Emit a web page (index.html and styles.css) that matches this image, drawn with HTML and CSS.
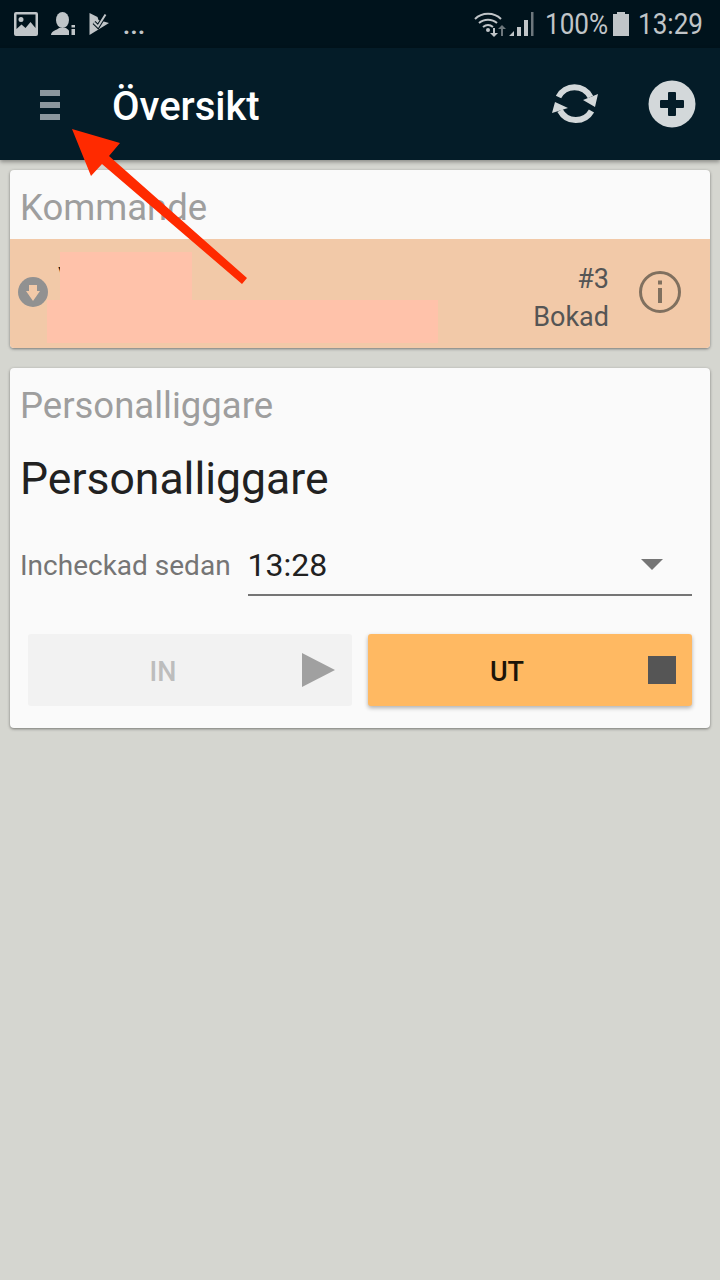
FILE: index.html
```html
<!DOCTYPE html>
<html lang="sv">
<head>
    <meta charset="UTF-8">
    <meta name="viewport" content="width=device-width, initial-scale=1.0">
    <title>Översikt</title>
    <link rel="stylesheet" href="styles.css">
</head>
<body>
    <div class="status-bar">
        <div class="status-left">
            <svg class="st-icon" width="24" height="24" viewBox="0 0 24 24"><path fill="#c0c5c8" fill-rule="evenodd" d="M2 0h20a2 2 0 0 1 2 2v20a2 2 0 0 1-2 2H2a2 2 0 0 1-2-2V2a2 2 0 0 1 2-2zM2.500 2.500V17l5-4.500 4 3.500 5-6 5 6V2.500zM7 5a2.500 2.500 0 1 1 0 5 2.500 2.500 0 0 1 0-5z"/></svg>
            <svg class="st-icon" width="24" height="24" viewBox="0 0 24 24"><ellipse cx="11.500" cy="8" rx="6.500" ry="8" fill="#c0c5c8"/><path fill="#c0c5c8" d="M0 23c0-4 6-5 8-7h7c1 1 3 2 3 3v4z"/><path fill="#c0c5c8" d="M20.500 13H24v2.500h-3.500zM20.500 17H24v6h-3.500z"/></svg>
            <svg class="st-icon" width="22" height="24" viewBox="0 0 22 24"><path fill="#c0c5c8" d="M1.500 1l8 4 1 3L21 11 1.500 23z"/><path fill="none" stroke="#00131c" stroke-width="4" d="M6 10.500l4 4L17.500 2.500"/><path fill="none" stroke="#c0c5c8" stroke-width="2" d="M6 10.500l4 4L17.500 2.500"/></svg>
            <span class="st-dots">...</span>
        </div>
        <div class="status-right">
            <svg class="st-wifi" width="34" height="26" viewBox="0 0 34 26"><path fill="none" stroke="#c0c5c8" stroke-width="2" d="M1 8c7-7 19-7 26 0M5 12c5-4.500 13-4.500 18 0M9 16c3-2.500 7-2.500 10 0"/><circle cx="14" cy="19" r="2" fill="#c0c5c8"/><path fill="#c0c5c8" d="M19 17h2v5h3l-4 4-4-4h3z"/><path fill="#6d777c" d="M28 14l4 4h-3v7h-2v-7h-3z"/></svg>
            <svg class="st-signal" width="25" height="24" viewBox="0 0 25 24"><path fill="#c0c5c8" d="M0 24l5-5v5zM8 15h4v9H8zM15 8h4v16h-4z"/><path fill="#6d777c" d="M22 0h2.500v24H22z"/></svg>
            <span class="st-text st-pct">100%</span>
            <svg class="st-battery" width="16" height="24" viewBox="0 0 16 24"><path fill="#c0c5c8" d="M4 0h8v2h4v22H0V2h4z"/></svg>
            <span class="st-text st-time">13:29</span>
        </div>
    </div>

    <div class="toolbar">
        <div class="menu-btn"><span></span><span></span><span></span></div>
        <div class="toolbar-title">Översikt</div>
        <svg class="refresh" width="46" height="42" viewBox="0 0 46 42"><path fill="none" stroke="#d3d8da" stroke-width="6" d="M6.500 14A18 18 0 0 1 38.500 14M39.500 28A18 18 0 0 1 8 27.500"/><path fill="#d3d8da" d="M46 11l-3 13-12-7zM0 30l3-11 13 6z"/></svg>
        <svg class="add" width="48" height="48" viewBox="0 0 48 48"><circle cx="24" cy="24" r="23.500" fill="#d3d8da"/><path fill="#041c28" d="M20 13a1 1 0 0 1 1-1h6a1 1 0 0 1 1 1v7h7a1 1 0 0 1 1 1v6a1 1 0 0 1-1 1h-7v7a1 1 0 0 1-1 1h-6a1 1 0 0 1-1-1v-7h-7a1 1 0 0 1-1-1v-6a1 1 0 0 1 1-1h7z"/></svg>
    </div>

    <div class="content">
        <div class="card">
            <div class="card-title first">Kommande</div>
            <div class="booking">
                <svg class="down" width="30" height="30" viewBox="0 0 30 30"><circle cx="15" cy="15" r="15" fill="#919191"/><path fill="#f2c9a8" d="M11 8h8v6h3l-7 10-7-10h3z"/></svg>
                <div class="booking-name">V</div>
                <div class="booking-status">
                    <div>#3</div>
                    <div>Bokad</div>
                </div>
                <svg class="info" width="42" height="42" viewBox="0 0 42 42"><circle cx="21" cy="21" r="19.500" fill="none" stroke="#80705f" stroke-width="3"/><path fill="#80705f" d="M19 17h4v15h-4zM19 9.500h4v4h-4z"/></svg>
                <div class="redact redact-a"></div>
                <div class="redact redact-b"></div>
            </div>
        </div>

        <div class="card">
            <div class="card-title">Personalliggare</div>
            <div class="log-title">Personalliggare</div>
            <div class="checkin">
                <span class="checkin-label">Incheckad sedan</span>
                <div class="select">
                    <span>13:28</span>
                    <i class="caret"></i>
                </div>
            </div>
            <div class="actions">
                <div class="btn btn-in">
                    <span>IN</span>
                    <i class="play"></i>
                </div>
                <div class="btn btn-ut">
                    <span>UT</span>
                    <i class="stop"></i>
                </div>
            </div>
        </div>
    </div>

    <svg class="arrow" width="720" height="300" viewBox="0 0 720 300"><path fill="#ff2a00" d="M72 129L120 143 109 156 247 278 242 284 102 164 91 176z"/></svg>
</body>
</html>
```

FILE: styles.css
```css
html, body {
    margin: 0;
    height: 100%;
}
body {
    position: relative;
    width: 720px;
    height: 1280px;
    overflow: hidden;
    background-color: #d5d6d0;
    font-family: Roboto, sans-serif;
}
.status-bar {
    height: 48px;
    box-sizing: border-box;
    padding: 0 16px 0 14px;
    background-color: #00131c;
    display: flex;
    justify-content: space-between;
    align-items: center;
    color: #c0c5c8;
}
.status-left {
    display: flex;
    align-items: center;
    gap: 13px;
}
.st-dots {
    font-size: 24px;
    font-weight: 700;
    line-height: 26px;
    letter-spacing: 0.5px;
    margin-top: 4px;
}
.status-right {
    display: flex;
    align-items: center;
}
.st-signal {
    margin-left: 1px;
    margin-right: 11px;
}
.st-text {
    font-size: 30px;
    line-height: 48px;
    white-space: nowrap;
    transform: scaleX(0.87);
    transform-origin: left center;
}
.st-pct {
    width: 62px;
}
.st-battery {
    margin: 0 9px 0 6px;
}
.st-time {
    width: 66px;
}
.toolbar {
    height: 112px;
    background-color: #041c28;
    display: flex;
    align-items: center;
    padding: 0 24px 0 40px;
    box-shadow: 0 2px 4px rgba(0, 0, 0, 0.35);
}
.menu-btn {
    width: 20px;
    display: flex;
    flex-direction: column;
    gap: 6px;
    margin-right: 52px;
    margin-top: 2px;
}
.menu-btn span {
    height: 6px;
    background-color: #8b979e;
}
.toolbar-title {
    flex: 1;
    color: #fff;
    font-size: 40px;
    font-weight: 500;
    margin-top: 4px;
}
.refresh {
    margin-right: 50px;
}
.content {
    padding: 10px;
    display: flex;
    flex-direction: column;
    gap: 20px;
}
.card {
    background-color: #fafafa;
    border-radius: 4px;
    box-shadow: 0 1px 3px rgba(0, 0, 0, 0.45);
    overflow: hidden;
}
.card-title {
    height: 74px;
    box-sizing: border-box;
    padding: 17px 10px 0;
    font-size: 36.5px;
    line-height: 42px;
    color: #9e9e9e;
}
.card-title.first {
    height: 69px;
}
.booking {
    position: relative;
    height: 109px;
    background-color: #f2c9a8;
    display: flex;
    align-items: center;
    padding-left: 8px;
    padding-right: 21px;
}
.down {
    margin-top: -3px;
}
.booking-name {
    flex: 1;
    margin-left: 10px;
    margin-top: -32px;
    font-size: 27px;
    color: #212121;
}
.booking-status {
    font-size: 27px;
    line-height: 38px;
    color: #555;
    text-align: right;
    margin-right: 30px;
    margin-top: 8px;
}
.info {
    margin-right: 8px;
    margin-top: -3px;
}
.redact {
    position: absolute;
    background-color: #ffc2aa;
}
.redact-a {
    left: 50px;
    top: 13px;
    width: 132px;
    height: 48px;
}
.redact-b {
    left: 37px;
    top: 61px;
    width: 391px;
    height: 43px;
}
.log-title {
    padding: 0 10px;
    margin-top: 12px;
    font-size: 44.5px;
    line-height: 50px;
    color: #212121;
}
.checkin {
    display: flex;
    align-items: flex-end;
    margin-top: 36px;
    padding: 0 18px 0 10px;
}
.checkin-label {
    font-size: 28px;
    line-height: 46px;
    color: #757575;
    margin-right: 17px;
    margin-bottom: 7px;
    white-space: nowrap;
}
.select {
    flex: 1;
    height: 56px;
    box-sizing: border-box;
    border-bottom: 2px solid #757575;
    display: flex;
    justify-content: space-between;
    align-items: center;
    font-size: 32px;
    color: #212121;
    padding-bottom: 5px;
}
.caret {
    width: 0;
    height: 0;
    margin-right: 29px;
    border-left: 11px solid transparent;
    border-right: 11px solid transparent;
    border-top: 11px solid #757575;
}
.actions {
    display: grid;
    grid-template-columns: 1fr 1fr;
    gap: 16px;
    padding: 38px 18px 22px;
}
.btn {
    position: relative;
    height: 72px;
    box-sizing: border-box;
    padding-top: 3px;
    border-radius: 3px;
    display: flex;
    justify-content: center;
    align-items: center;
    font-size: 27px;
    font-weight: 500;
}
.btn-in {
    background-color: #f2f2f2;
    color: #bdbdbd;
    padding-right: 54px;
}
.btn-ut {
    background-color: #ffb962;
    color: #1c1408;
    box-shadow: 0 2px 4px rgba(0, 0, 0, 0.3);
    padding-right: 46px;
}
.play {
    position: absolute;
    right: 17px;
    top: 19px;
    width: 0;
    height: 0;
    border-top: 17px solid transparent;
    border-bottom: 17px solid transparent;
    border-left: 33px solid #a0a0a0;
}
.stop {
    position: absolute;
    right: 16px;
    top: 22px;
    width: 28px;
    height: 28px;
    background-color: #555;
}
.arrow {
    position: absolute;
    left: 0;
    top: 0;
}
```
